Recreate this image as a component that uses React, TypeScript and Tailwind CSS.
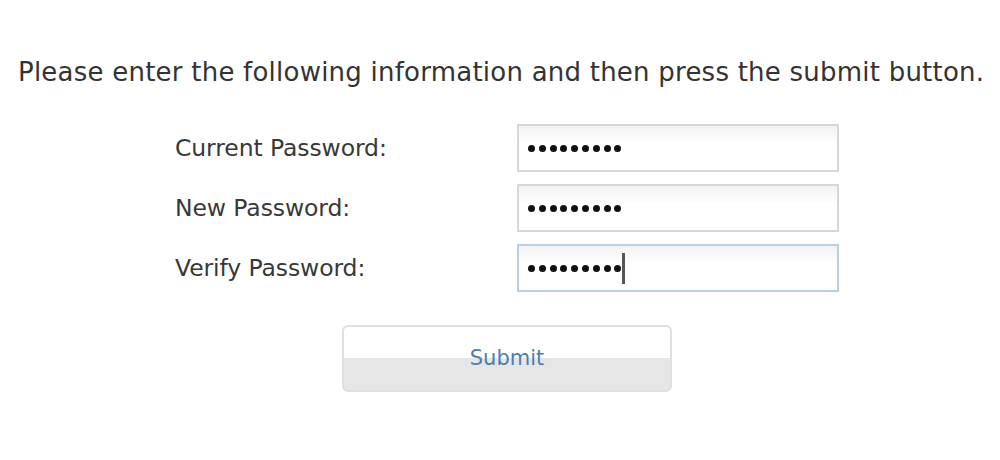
const fields = [
  { label: 'Current Password:', focused: false },
  { label: 'New Password:', focused: false },
  { label: 'Verify Password:', focused: true },
];

const Dots = () => (
  <div className="flex items-center gap-[3.8px]">
    {Array.from({ length: 9 }).map((_, i) => (
      <span key={i} className="block h-[7px] w-[7px] rounded-full bg-[#111]" />
    ))}
  </div>
);

const App = () => {
  return (
    <div className="h-[460px] w-[1000px] bg-white text-[#333]" style={{ fontFamily: '"DejaVu Sans", Verdana, sans-serif' }}>
      <div className="pt-[58px] pl-[18px] text-[26px] leading-[28px] tracking-[0.23px] whitespace-nowrap">
        Please enter the following information and then press the submit button.
      </div>

      <div className="mt-[38px] flex flex-col gap-[12px]">
        {fields.map((f) => (
          <div key={f.label} className="flex items-center">
            <div className="w-[517px] pl-[175px] pt-[2px] text-[23.5px] tracking-[-0.1px] text-[#383838]">{f.label}</div>
            <div
              className={`flex h-[48px] w-[322px] items-center border-2 bg-gradient-to-b from-[#f2f2f2] to-white to-40% pl-[9px] ${
                f.focused ? 'border-[#b9cfe6]' : 'border-[#d6d6de]'
              }`}
            >
              <Dots />
              {f.focused && <span className="ml-[1px] block h-[31px] w-[3px] bg-[#555]" />}
            </div>
          </div>
        ))}
      </div>

      <div className="mt-[33px] ml-[342px] flex h-[67px] w-[330px] items-center justify-center rounded-[6px] border-2 border-[#e0e0e0] bg-gradient-to-b from-white from-50% to-[#e6e6e6] to-50% text-[21px] text-[#4c7fae]">
        Submit
      </div>
    </div>
  );
};

export default App;
